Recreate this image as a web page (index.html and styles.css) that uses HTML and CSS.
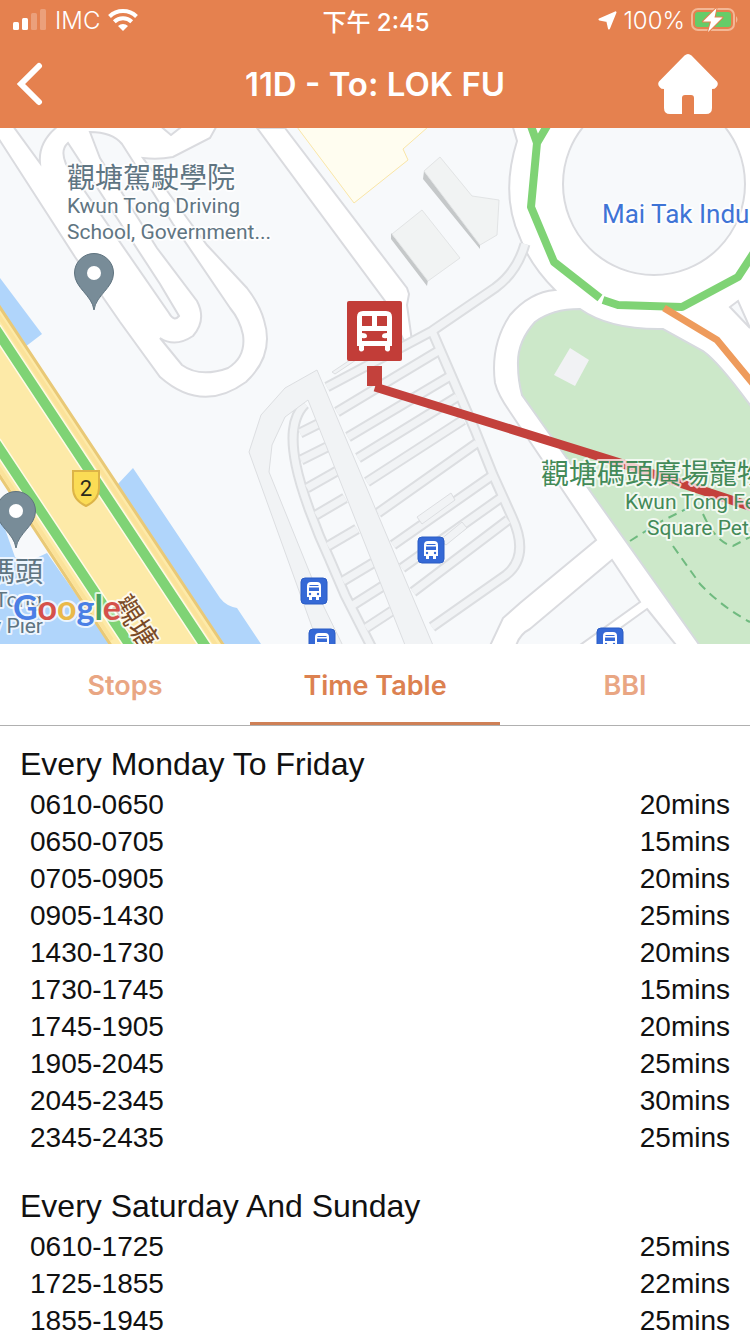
FILE: index.html
```html
<!DOCTYPE html>
<html lang="en">
<head>
<meta charset="utf-8">
<meta name="viewport" content="width=device-width, initial-scale=1">
<title>11D - To: LOK FU</title>
<link rel="stylesheet" href="styles.css">
</head>
<body>
<div class="app">
  <header class="top">
    <div class="status">
      <div class="status-left">
        <svg width="34" height="22" viewBox="0 0 34 22" fill="#fff" aria-hidden="true">
          <rect x="0" y="13" width="6" height="8" rx="1.5"/><rect x="9" y="9" width="6" height="12" rx="1.5"/>
          <rect x="18" y="4" width="6" height="17" rx="1.5" opacity=".25"/><rect x="27" y="0" width="6" height="21" rx="1.5" opacity=".25"/>
        </svg>
        <span>IMC</span>
        <svg width="30" height="22" viewBox="0 0 30 22" aria-hidden="true">
          <g fill="none" stroke="#fff" stroke-width="4"><path d="M1.5 7.5a19.5 19.5 0 0 1 27 0"/><path d="M6.3 12.8a12.6 12.6 0 0 1 17.4 0"/></g>
          <path d="M10 17a7.4 7.4 0 0 1 10 0l-5 5z" fill="#fff"/>
        </svg>
      </div>
      <div class="clock">下午 2:45</div>
      <div class="status-right">
        <svg width="19" height="19" viewBox="0 0 19 19" aria-hidden="true"><path d="M17.500 1.300 11 17.500 9.300 10 1.500 8.500z" fill="#fff" stroke="#fff" stroke-width="2" stroke-linejoin="round"/></svg>
        <span>100%</span>
        <svg width="48" height="24" viewBox="0 0 48 24" aria-hidden="true">
          <rect x="1" y="1" width="42" height="21" rx="6" fill="none" stroke="#f3b795" stroke-width="2"/>
          <path d="M45 8q3 3.500 0 7z" fill="#f3b795"/>
          <rect x="4" y="4" width="36" height="15" rx="3" fill="#66cc68"/>
          <path d="M25.500 0 12 13.500h8L17 24 31.500 9.500h-8z" fill="#fff" stroke="#e5814f" stroke-width="2" stroke-linejoin="round" paint-order="stroke"/>
        </svg>
      </div>
    </div>
    <div class="nav">
      <button class="icon-btn" aria-label="Back">
        <svg width="28" height="44" viewBox="0 0 28 44" aria-hidden="true"><path d="M23 4 5 22 23 40" fill="none" stroke="#fff" stroke-width="6" stroke-linecap="round" stroke-linejoin="miter"/></svg>
      </button>
      <h1 class="title">11D - To: LOK FU</h1>
      <button class="icon-btn home" aria-label="Home">
        <svg width="60" height="60" viewBox="0 0 60 60" aria-hidden="true"><path d="M26.500 1.500q3.500-3 7 0L59 27.500q2 3-1 6-1 1.500-4 1.500v19q0 6-6 6H36V44q0-3-3-3h-6q-3 0-3 3v16H12q-6 0-6-6V35q-3 0-4-1.500-3-3-1-6z" fill="#fff"/></svg>
      </button>
    </div>
  </header>

  <svg class="map" viewBox="0 128 750 516" role="img" aria-label="Route map">
    <defs>
      <g id="bus">
        <rect x="-13" y="-13" width="26" height="26" rx="4" fill="#3569d6" stroke="#2b5cc4"/>
        <path d="M-7-5q0-4 4-4h6q4 0 4 4V6H5v3H2V6h-4v3h-3V6h-2z" fill="#fff"/>
        <path d="M-4.500-6h9v1h-9zM-5-3.500H5v3.500H-5z" fill="#3569d6"/><circle cx="-4" cy="3" r="1.200" fill="#3569d6"/><circle cx="4" cy="3" r="1.200" fill="#3569d6"/>
      </g>
      <g id="pin"><path d="M0 37C-2 22-19.500 15-19.500 0a19.500 19.500 0 0 1 39 0C19.500 15 2 22 0 37z" fill="#788c98" stroke="#5f737f"/><circle r="7" fill="#fff"/></g>
      <g id="lanes">
        <path d="M305 404C291 418 291 440 296 465S316 530 330 560L345 595 373 650"/>
        <path d="M525 244Q517 272 495 288L432 331 327 387"/>
        <path d="M432 331 475 430 493 475 512 517Q530 556 506 575L432 627"/>
        <path d="M300 433 318 424M301 460 327 447M307 488 337 471M316 515 345 498M328 546 357 529M343 581 373 563M353 605 383 586M366 628 392 611"/>
        <path d="M337 412 440 350M348 437 452 375M358 458 457 397M367 482 463 420M378 513 477 443M393 545 493 475M402 568 502 497M413 592 508 520"/>
      </g>
    </defs>
    <rect y="128" width="750" height="516" fill="#f7f9fb"/>

    <g class="road">
      <path d="M-5 133 75 257 120 322 160 377Q202 414 246 382 275 355 264 320 260 305 247 288L207 245 187 218 143 158Q158 160 173 157L210 138 220 120H-5z"/>
      <path d="M257 128 385 301 405 343 412 341 407 305 409 294 407 288 285 128z"/>
      <path d="M512 124 517 141Q500 195 520 238 530 265 555 290 530 292 510 315 490 345 495 383 498 395 510 412L596 540 520 603 503 618 488 650H760V120z"/>
    </g>
    <g class="block">
      <path d="M13 126 40 163Q38 142 58 126z"/>
      <path d="M90 132 100 158 157 248 197 301Q207 320 193 336 175 348 160 338L182 365Q200 378 228 368 246 357 243 335 240 320 230 308L173 224 122 144Q112 132 90 132z"/>
      <path d="M68 143Q60 150 66 164L169 313Q174 322 179 316L160 284z"/>
      <path d="M158 124 171 135 185 124z"/>
      <circle cx="654" cy="184" r="91"/>
      <path d="M612 560 640 602 573 650H515Q518 635 530 629z"/>
      <path d="M647 609 680 650H590z"/>
      <path d="M730 307 738 301 750 328z"/>
    </g>
    <path d="M518 365Q517 342 535 322 552 309 580 309 610 330 663 329L703 351Q720 363 755 412V650H703L522 395Q518 380 518 365z" fill="#cce8c9" stroke="#d6dade" stroke-width="2"/>
    <path d="M570 348 589 360 575 386 554 375z" fill="#f1f2f4"/>
    <g class="trail"><path d="M630 541 660 522 688 508"/><path d="M673 546 700 584Q722 607 750 622"/><path d="M703 514Q716 543 733 546L750 537"/></g>

    <path d="M297 127 354 203 408 160 403 149 428 127z" fill="#fffdf0" stroke="#fae6a6"/>
    <path d="M424 171 480 243V249L423 179zM391 233 428 280 427 286 391 239z" fill="#c5c8c9"/>
    <path d="M440 157 472 196 499 200 497 235 480 245 424 171zM422 210 460 258 428 281 392 234z" fill="#f1f3f3" stroke="#e2e4e5"/>

    <use href="#lanes" class="lane-edge"/>
    <use href="#lanes" class="lane"/>
    <path class="apron" d="M332 372 350 360 362 356 335 374z"/>
    <path class="apron" d="M317 370 285 388 261 415 249 452 312 627 320 650H345L322 603 269 472 272 445 285 417 308 400 407 650H435z"/>
    <path class="apron" d="M417 517 451 493 455 500 422 524zM440 540 462 522 467 528 446 545z"/>

    <path d="M0 278 42 334 25 347 0 320zM133 468 117 485 222 650H265L237 608Q226 606 220 598zM0 515 15 557 30 561 47 553 115 650H0z" fill="#b0d5fb"/>
    <path d="M-5 300 222 643 227 650H114L-5 469z" fill="#fdeaa8" stroke="#e9c977" stroke-width="3"/>
    <path d="M-5 310 218 648M-5 462 112 640" stroke="#fbe29a" stroke-width="4" fill="none"/>
    <g fill="none"><path d="M-5 328 208 650M-5 442 133 650" stroke="#fffbe6" stroke-width="13"/><path d="M-5 328 208 650M-5 442 133 650" stroke="#7fd375" stroke-width="10"/></g>
    <path d="M73 471h26v17q0 12-13 18-13-6-13-18z" fill="#fbdc55" stroke="#ddb447" stroke-width="2"/>
    <text class="shield" x="86" y="496">2</text>

    <g fill="none" stroke-width="8" stroke-linejoin="round">
      <path d="M531 126 537 143 531 207 554 262 600 298M603 300 618 305 682 307 738 277 755 251M547 126 537 143" stroke="#7fd375"/>
      <path d="M664 308 717 340 755 386" stroke="#ee9b5c" stroke-width="7"/>
    </g>

    <path d="M375 387 617 462 755 508" fill="none" stroke="#c3413c" stroke-width="9"/>
    <path d="M367 366h15v20h-15z" fill="#c3413c"/>
    <rect x="347" y="301" width="55" height="60" rx="2" fill="#c23d38"/>
    <g transform="translate(357 311)">
      <path d="M6 0h23q6 0 6 6v29h-2v4q-2 3-5 0v-4H7v4q-3 3-5 0v-4H0V6q0-6 6-6z" fill="#fff"/>
      <path d="M5 5h10v10H5zM20 5h10v10H20zM5 20h25v2q-5 0-5 3t5 2v3H5v-3q5 1 5-2t-5-3z" fill="#c23d38"/>
    </g>

    <use href="#bus" x="431" y="550"/><use href="#bus" x="314" y="591"/><use href="#bus" x="322" y="642"/><use href="#bus" x="610" y="641"/>
    <use href="#pin" x="94" y="273"/><use href="#pin" x="16" y="511"/>

    <g class="label slate">
      <text class="cjk" x="67" y="188">觀塘駕駛學院</text>
      <text x="67" y="213">Kwun Tong Driving</text>
      <text x="67" y="239">School, Government...</text>
      <text class="cjk" x="43" y="582" text-anchor="end">碼頭</text>
      <text x="42" y="607" text-anchor="end">Tong</text>
      <text x="43" y="633" text-anchor="end">y Pier</text>
    </g>
    <text class="label blue" x="602" y="223">Mai Tak Indu</text>
    <g class="label green">
      <text class="cjk" x="541" y="484">觀塘碼頭廣場寵物</text>
      <text x="625" y="509">Kwun Tong Fe</text>
      <text x="647" y="535">Square Pet</text>
    </g>
    <text class="label brown" transform="translate(112 604) rotate(57)">觀塘</text>
    <text class="label google" x="13" y="620"><tspan fill="#4a7fe5">G</tspan><tspan fill="#d5514b">o</tspan><tspan fill="#e9b94a">o</tspan><tspan fill="#4a7fe5">g</tspan><tspan fill="#48a05f">l</tspan><tspan fill="#d5514b">e</tspan></text>
  </svg>

  <nav class="tabs" role="tablist">
    <button class="tab" role="tab" aria-selected="false">Stops</button>
    <button class="tab active" role="tab" aria-selected="true">Time Table</button>
    <button class="tab" role="tab" aria-selected="false">BBI</button>
  </nav>

  <main class="schedule">
    <section>
      <h2 id="weekday">Every Monday To Friday</h2>
      <table aria-labelledby="weekday">
        <tr><td>0610-0650</td><td>20mins</td></tr>
        <tr><td>0650-0705</td><td>15mins</td></tr>
        <tr><td>0705-0905</td><td>20mins</td></tr>
        <tr><td>0905-1430</td><td>25mins</td></tr>
        <tr><td>1430-1730</td><td>20mins</td></tr>
        <tr><td>1730-1745</td><td>15mins</td></tr>
        <tr><td>1745-1905</td><td>20mins</td></tr>
        <tr><td>1905-2045</td><td>25mins</td></tr>
        <tr><td>2045-2345</td><td>30mins</td></tr>
        <tr><td>2345-2435</td><td>25mins</td></tr>
      </table>
    </section>
    <section>
      <h2 id="weekend">Every Saturday And Sunday</h2>
      <table aria-labelledby="weekend">
        <tr><td>0610-1725</td><td>25mins</td></tr>
        <tr><td>1725-1855</td><td>22mins</td></tr>
        <tr><td>1855-1945</td><td>25mins</td></tr>
      </table>
    </section>
  </main>
</div>
</body>
</html>
```
FILE: styles.css
```css
* { box-sizing: border-box; }
body { margin: 0; background: #fff; font-family: Inter, "Noto Sans CJK TC", sans-serif; }
button { border: 0; background: none; font: inherit; color: inherit; padding: 0; cursor: pointer; }
svg { display: block; }
.app { display: flex; flex-direction: column; height: 100vh; overflow: hidden; }
.top, .map, .tabs { flex: none; }
.top { background: #e5814f; color: #fff; }
.status { display: grid; grid-template-columns: 1fr auto 1fr; align-items: center; height: 40px; padding: 0 11px 0 13px; font-size: 24px; font-weight: 300; }
.status-left, .status-right { display: flex; align-items: center; gap: 8px; }
.status-right { justify-content: flex-end; gap: 6px; }
.clock { font-weight: 500; }
.nav { display: grid; grid-template-columns: 1fr auto 1fr; align-items: center; height: 88px; padding: 0 16px; }
.icon-btn { justify-self: start; }
.home { justify-self: end; margin-right: 16px; }
.title { margin: 0; font-size: 33px; font-weight: 600; }

.map { width: 100%; height: auto; overflow: hidden; }
.road path { fill: #fff; stroke: #dadbdf; stroke-width: 2; }
.block { fill: #f7f9fb; stroke: #dadbdf; stroke-width: 2; }
.trail { fill: none; stroke: #6fba7f; stroke-width: 2; stroke-dasharray: 9 6; }
.lane-edge { fill: none; stroke: #dcdee1; stroke-width: 11; }
.lane { fill: none; stroke: #f1f3f5; stroke-width: 7; }
.apron { fill: #f1f3f5; stroke: #dcdee1; stroke-width: 1; }
.label { font-family: Roboto, "Noto Sans CJK TC", sans-serif; font-size: 21px; paint-order: stroke; stroke: #fff; stroke-opacity: .75; stroke-width: 4px; stroke-linejoin: round; }
.cjk { font-size: 28px; }
.slate { fill: #5f7582; }
.blue { fill: #3f74d6; font-size: 26px; }
.green { fill: #438a58; }
.brown { fill: #7a4a26; font-size: 28px; }
.google { font-family: Lato, sans-serif; font-size: 34px; font-weight: 700; }
.shield { font-family: Roboto, sans-serif; font-size: 22px; fill: #2c2a1c; text-anchor: middle; }

.tabs { display: grid; grid-template-columns: repeat(3, 1fr); height: 82px; border-bottom: 1px solid #b0b0b0; }
.tab { padding-top: 4px; color: #e9a683; font-size: 27px; font-weight: 600; border-bottom: 3px solid transparent; }
.tab.active { color: #dc8150; border-color: #cf8056; }

.schedule { flex: 1; min-height: 0; overflow-y: auto; scrollbar-width: none; display: flex; flex-direction: column; gap: 30px; padding: 18px 20px 0; font-family: "Liberation Sans", Arial, sans-serif; color: #111; }
.schedule h2 { margin: 0; padding-bottom: 2px; font-size: 32px; font-weight: 400; line-height: 40px; }
.schedule table { width: 100%; border-collapse: collapse; font-size: 28px; line-height: 37px; }
.schedule td { padding: 0 0 0 10px; }
.schedule td:last-child { text-align: right; }
```
